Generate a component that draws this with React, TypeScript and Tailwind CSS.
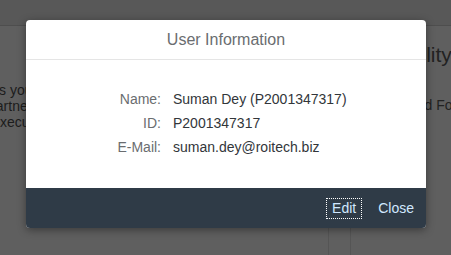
import React from "react";

const rows = [
  { label: "Name:", value: "Suman Dey (P2001347317)" },
  { label: "ID:", value: "P2001347317" },
  { label: "E-Mail:", value: "suman.dey@roitech.biz" },
];

export default function App() {
  return (
    <div
      className="relative w-[451px] h-[255px] overflow-hidden bg-[#5f5f5f]"
      style={{ fontFamily: '"Liberation Sans", Arial, sans-serif' }}
    >
      {/* Dimmed page behind the dialog */}
      <div className="h-[26px] bg-[#585858] border-b border-[#4e4e4e]" />
      <div className="flex h-[229px]">
        <div className="w-[329px] shrink-0 border-r border-[#555] overflow-hidden">
          <div className="-ml-[46px] pt-[57px] text-[14px] leading-[15px] text-[#1c1c1c] whitespace-nowrap">
            <div>This lets you</div>
            <div className="mt-[1px] -ml-[8px]">Of the partner</div>
            <div className="mt-[1px]">To be executed</div>
          </div>
        </div>
        <div className="w-[21px] shrink-0" />
        <div className="flex-1 border-l border-[#555] overflow-hidden">
          <div className="whitespace-nowrap text-[#222]">
            <div className="pt-[17px] pl-[2px] text-[21px] leading-[24px]">Availability</div>
            <div className="mt-[30px] pl-[37px] text-[14px] leading-[16px]">Upload Forms</div>
          </div>
        </div>
      </div>

      {/* Dialog */}
      <div className="absolute left-[26px] top-[20px] w-[400px] rounded-[4px] bg-white shadow-[0_2px_8px_rgba(0,0,0,0.4)] overflow-hidden">
        <div className="h-[40px] flex items-center justify-center border-b border-[#e5e5e5] text-[16px] text-[#6a6d70]">
          User Information
        </div>
        <div className="pt-[27px] pb-[29px] grid grid-cols-[135px_1fr] gap-x-[12px] text-[14px] leading-[24px]">
          {rows.map((r) => (
            <React.Fragment key={r.label}>
              <div className="text-right text-[#6a6d70]">{r.label}</div>
              <div className="text-[#32363a]">{r.value}</div>
            </React.Fragment>
          ))}
        </div>
        <div className="h-[40px] bg-[#2f3b47] flex items-center justify-end gap-[10px] pr-[6px] text-[14px] text-[#d1e8ff]">
          <button className="h-[21px] px-[6px] outline-1 outline-dotted outline-white -outline-offset-1 leading-[21px]">
            Edit
          </button>
          <button className="h-[21px] px-[6px] leading-[21px]">Close</button>
        </div>
      </div>
    </div>
  );
}
